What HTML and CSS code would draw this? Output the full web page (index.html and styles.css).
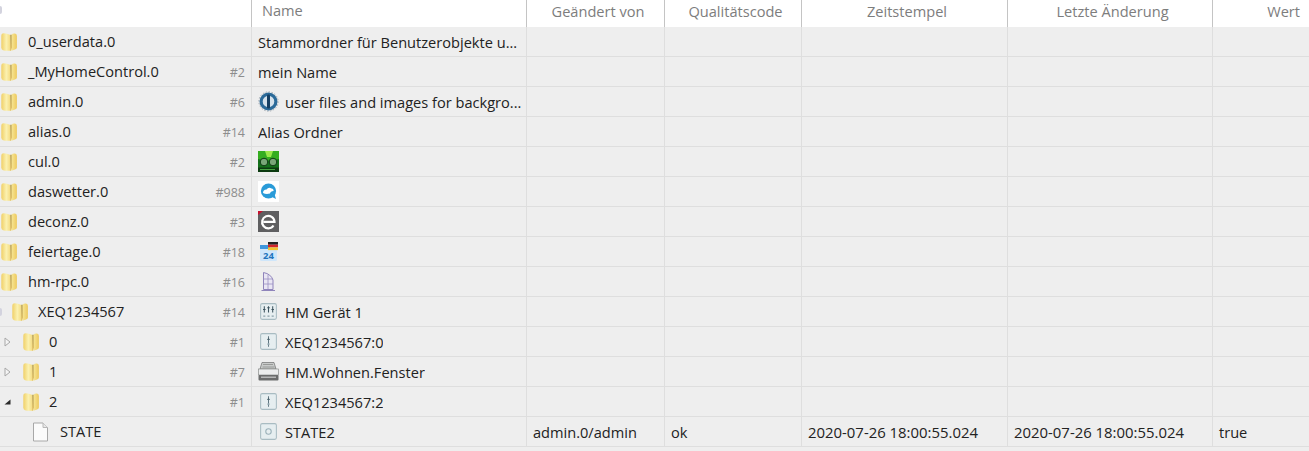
FILE: index.html
```html
<!DOCTYPE html>
<html lang="de">
<head>
  <meta charset="UTF-8">
  <title>Objekte</title>
  <link rel="stylesheet" href="styles.css">
</head>
<body>
  <svg class="defs" width="0" height="0">
    <defs>
      <linearGradient id="gradFolder" x1="0" y1="0" x2="1" y2="0">
        <stop offset="0" stop-color="#f0d068"/>
        <stop offset="0.55" stop-color="#fbf1b0"/>
        <stop offset="1" stop-color="#f4db80"/>
      </linearGradient>
      <linearGradient id="gradRight" x1="0" y1="0" x2="1" y2="0">
        <stop offset="0" stop-color="#f8e99a"/>
        <stop offset="1" stop-color="#edc95f"/>
      </linearGradient>
      <linearGradient id="gradFlap" x1="0" y1="0" x2="0" y2="1">
        <stop offset="0" stop-color="#b8a258"/>
        <stop offset="1" stop-color="#e4c05a"/>
      </linearGradient>
      <symbol id="folder" viewBox="0 0 16 18">
        <path d="M0.3 3 Q0.3 0.3 2.5 0.3 Q6 0.3 9.5 2 L9.5 17.8 Q4 18 2 17.2 Q0.3 16.5 0.3 14.5 Z" fill="url(#gradFolder)"/>
        <path d="M10 2 Q12 0.3 14 0.6 Q15.9 1 15.9 3 L15.9 14.5 Q15.9 16 14 16.5 L10.5 17.8 Z" fill="url(#gradRight)"/>
        <path d="M9.2 1.8 L10.6 1.8 L10.9 14.5 L10 17.8 L9.2 17.8 Z" fill="url(#gradFlap)"/>
      </symbol>
      <symbol id="device" viewBox="0 0 20 20">
        <rect x="2.5" y="2.5" width="15" height="15" rx="1.5" fill="#e6eef0" stroke="#a9bcc2"/>
        <path d="M10 5 V15" stroke="#5f7680" stroke-width="1"/>
        <path d="M8.5 8.5 H11.5 L10 6.5 Z" fill="#4c626c"/>
        <circle cx="10" cy="12.5" r="1" fill="#8aa0a8"/>
      </symbol>
    </defs>
  </svg>

  <div class="grid">
    <div class="row head">
      <div class="cell tree"><span class="edge-mark"></span></div>
      <div class="cell name-head">Name</div>
      <div class="cell center">Geändert von</div>
      <div class="cell center">Qualitätscode</div>
      <div class="cell center">Zeitstempel</div>
      <div class="cell center">Letzte Änderung</div>
      <div class="cell right">Wert</div>
    </div>

    <div class="row">
      <div class="cell tree lvl0"><svg class="folder"><use href="#folder"/></svg><span class="label">0_userdata.0</span></div>
      <div class="cell"><span class="text">Stammordner für Benutzerobjekte u...</span></div>
      <div class="cell"></div><div class="cell"></div><div class="cell"></div><div class="cell"></div><div class="cell"></div>
    </div>
    <div class="row">
      <div class="cell tree lvl0"><svg class="folder"><use href="#folder"/></svg><span class="label">_MyHomeControl.0</span><span class="count">#2</span></div>
      <div class="cell"><span class="text">mein Name</span></div>
      <div class="cell"></div><div class="cell"></div><div class="cell"></div><div class="cell"></div><div class="cell"></div>
    </div>
    <div class="row">
      <div class="cell tree lvl0"><svg class="folder"><use href="#folder"/></svg><span class="label">admin.0</span><span class="count">#6</span></div>
      <div class="cell">
        <svg class="icon" viewBox="0 0 21 21">
          <circle cx="10.5" cy="10.5" r="7.4" fill="#d5e2ec" stroke="#2b6a99" stroke-width="3.2"/>
          <circle cx="10.5" cy="10.5" r="9.6" fill="none" stroke="#7a8794" stroke-width="0.7" stroke-dasharray="1.5 1.5"/>
          <rect x="9" y="3.5" width="3" height="14" rx="1.2" fill="#153f63"/>
        </svg>
        <span class="text">user files and images for backgro...</span>
      </div>
      <div class="cell"></div><div class="cell"></div><div class="cell"></div><div class="cell"></div><div class="cell"></div>
    </div>
    <div class="row">
      <div class="cell tree lvl0"><svg class="folder"><use href="#folder"/></svg><span class="label">alias.0</span><span class="count">#14</span></div>
      <div class="cell"><span class="text">Alias Ordner</span></div>
      <div class="cell"></div><div class="cell"></div><div class="cell"></div><div class="cell"></div><div class="cell"></div>
    </div>
    <div class="row">
      <div class="cell tree lvl0"><svg class="folder"><use href="#folder"/></svg><span class="label">cul.0</span><span class="count">#2</span></div>
      <div class="cell">
        <svg class="icon" viewBox="0 0 21 21">
          <rect width="21" height="21" fill="#14701a"/>
          <path d="M0 0 H21 V8 Q10 11 0 8 Z" fill="#35ad20"/>
          <path d="M7 0 H15 L13 6 H9 Z" fill="#9be84a"/>
          <circle cx="6" cy="11" r="3.8" fill="#79a678" stroke="#0c3a10"/>
          <circle cx="15" cy="11" r="3.8" fill="#79a678" stroke="#0c3a10"/>
          <rect y="16.5" width="21" height="4.5" fill="#0c3a10"/>
          <rect x="2" y="18" width="15" height="1" fill="#47a342"/>
        </svg>
      </div>
      <div class="cell"></div><div class="cell"></div><div class="cell"></div><div class="cell"></div><div class="cell"></div>
    </div>
    <div class="row">
      <div class="cell tree lvl0"><svg class="folder"><use href="#folder"/></svg><span class="label">daswetter.0</span><span class="count">#988</span></div>
      <div class="cell">
        <svg class="icon" viewBox="0 0 21 21">
          <rect width="21" height="21" fill="#fff"/>
          <circle cx="10.5" cy="10" r="7.6" fill="#2a9bd8"/>
          <path d="M14 16 L18 18 L16.5 13 Z" fill="#2a9bd8"/>
          <path d="M5 12 Q5 8.5 8.5 8.5 Q10.5 5.8 13.5 7.5 Q16 8 15.5 10 Q12.5 10 12 12.5 Q8 13.5 5 12 Z" fill="#fff"/>
        </svg>
      </div>
      <div class="cell"></div><div class="cell"></div><div class="cell"></div><div class="cell"></div><div class="cell"></div>
    </div>
    <div class="row">
      <div class="cell tree lvl0"><svg class="folder"><use href="#folder"/></svg><span class="label">deconz.0</span><span class="count">#3</span></div>
      <div class="cell">
        <svg class="icon" viewBox="0 0 21 21">
          <rect width="21" height="21" fill="#5f5f61"/>
          <path d="M0 0 H5 L0 4 Z" fill="#c8102e"/>
          <path d="M15.5 14.5 A6.2 6.2 0 1 1 16.5 10.8 H5.5" fill="none" stroke="#fff" stroke-width="2.2"/>
        </svg>
      </div>
      <div class="cell"></div><div class="cell"></div><div class="cell"></div><div class="cell"></div><div class="cell"></div>
    </div>
    <div class="row">
      <div class="cell tree lvl0"><svg class="folder"><use href="#folder"/></svg><span class="label">feiertage.0</span><span class="count">#18</span></div>
      <div class="cell">
        <svg class="icon" viewBox="0 0 21 21">
          <rect x="2" y="4" width="17" height="16" rx="1.5" fill="#cfe6fa"/>
          <rect x="2" y="4" width="10" height="4" fill="#3f97dc"/>
          <rect x="10" y="1" width="10" height="2.7" fill="#222"/>
          <rect x="10" y="3.7" width="10" height="2.7" fill="#d3232a"/>
          <rect x="10" y="6.4" width="10" height="2.7" fill="#f1c22e"/>
          <text x="10.5" y="18.3" class="cal-day">24</text>
        </svg>
      </div>
      <div class="cell"></div><div class="cell"></div><div class="cell"></div><div class="cell"></div><div class="cell"></div>
    </div>
    <div class="row">
      <div class="cell tree lvl0"><svg class="folder"><use href="#folder"/></svg><span class="label">hm-rpc.0</span><span class="count">#16</span></div>
      <div class="cell">
        <svg class="icon" viewBox="0 0 21 21">
          <path d="M5.5 1.5 Q13 3 15 9 V18.5 H5.5 Z" fill="#e9e6f3" stroke="#8f84bb"/>
          <path d="M5.5 8 H15 M5.5 13 H15 M10 4 V18" stroke="#9a90c2" stroke-width="0.8" fill="none"/>
          <path d="M3.5 19.5 H17" stroke="#8f84bb" stroke-width="1"/>
        </svg>
      </div>
      <div class="cell"></div><div class="cell"></div><div class="cell"></div><div class="cell"></div><div class="cell"></div>
    </div>
    <div class="row">
      <div class="cell tree lvl1"><span class="edge-mark"></span><svg class="folder"><use href="#folder"/></svg><span class="label">XEQ1234567</span><span class="count">#14</span></div>
      <div class="cell">
        <svg class="icon" viewBox="0 0 20 20">
          <rect x="2.5" y="2.5" width="15" height="15" rx="1.5" fill="#e6eef0" stroke="#a9bcc2"/>
          <path d="M6 5 V11 M10 5 V11 M14 5 V11" stroke="#3f5560" stroke-width="1"/>
          <path d="M4.8 8 H7.2 M8.8 6.5 H11.2 M12.8 8 H15.2" stroke="#3f5560"/>
          <path d="M5 14.5 H7 M9 14.5 H11 M13 14.5 H15" stroke="#8aa0a8" stroke-width="1.2"/>
        </svg>
        <span class="text">HM Gerät 1</span>
      </div>
      <div class="cell"></div><div class="cell"></div><div class="cell"></div><div class="cell"></div><div class="cell"></div>
    </div>
    <div class="row">
      <div class="cell tree lvl2"><svg class="toggle" viewBox="0 0 7 10"><path d="M1 1 L6 5 L1 9 Z" fill="#f4f4f4" stroke="#a8a8a8"/></svg><svg class="folder"><use href="#folder"/></svg><span class="label">0</span><span class="count">#1</span></div>
      <div class="cell"><svg class="icon"><use href="#device"/></svg><span class="text">XEQ1234567:0</span></div>
      <div class="cell"></div><div class="cell"></div><div class="cell"></div><div class="cell"></div><div class="cell"></div>
    </div>
    <div class="row">
      <div class="cell tree lvl2"><svg class="toggle" viewBox="0 0 7 10"><path d="M1 1 L6 5 L1 9 Z" fill="#f4f4f4" stroke="#a8a8a8"/></svg><svg class="folder"><use href="#folder"/></svg><span class="label">1</span><span class="count">#7</span></div>
      <div class="cell">
        <svg class="icon" viewBox="0 0 21 21">
          <path d="M4 1.5 H16 L18 8 H2 Z" fill="#c9cbca" stroke="#6d6f6e" stroke-width="0.7"/>
          <path d="M5 3.5 H15 M4.5 6 H16.5" stroke="#8b8d8c" stroke-width="0.8"/>
          <rect x="0.5" y="8" width="20" height="6" fill="#eceded" stroke="#8b8d8c" stroke-width="0.7"/>
          <rect x="0.5" y="14" width="20" height="5.5" rx="1" fill="#6b6c6c"/>
          <rect x="3" y="15.5" width="15" height="1.5" fill="#b5b6b6"/>
        </svg>
        <span class="text">HM.Wohnen.Fenster</span>
      </div>
      <div class="cell"></div><div class="cell"></div><div class="cell"></div><div class="cell"></div><div class="cell"></div>
    </div>
    <div class="row">
      <div class="cell tree lvl2"><svg class="toggle" viewBox="0 0 7 10"><path d="M0.5 7.5 L6.5 7.5 L6.5 2.5 Z" fill="#2b2b2b"/></svg><svg class="folder"><use href="#folder"/></svg><span class="label">2</span><span class="count">#1</span></div>
      <div class="cell"><svg class="icon"><use href="#device"/></svg><span class="text">XEQ1234567:2</span></div>
      <div class="cell"></div><div class="cell"></div><div class="cell"></div><div class="cell"></div><div class="cell"></div>
    </div>
    <div class="row">
      <div class="cell tree lvl3">
        <svg class="file" viewBox="0 0 17 20">
          <path d="M1.5 1 H11 L15.5 5.5 V19 H1.5 Z" fill="#fbfbfb" stroke="#a8a8a8"/>
          <path d="M11 1 V5.5 H15.5" fill="#e8e8e8" stroke="#b8b8b8"/>
        </svg>
        <span class="label">STATE</span>
      </div>
      <div class="cell">
        <svg class="icon" viewBox="0 0 20 20">
          <rect x="2.5" y="2.5" width="15" height="15" rx="1.5" fill="#e6eef0" stroke="#a9bcc2"/>
          <circle cx="10" cy="10" r="2.6" fill="none" stroke="#9ab0b8"/>
        </svg>
        <span class="text">STATE2</span>
      </div>
      <div class="cell">admin.0/admin</div>
      <div class="cell">ok</div>
      <div class="cell stamp">2020-07-26 18:00:55.024</div>
      <div class="cell stamp">2020-07-26 18:00:55.024</div>
      <div class="cell">true</div>
    </div>
    <div class="row stub"></div>
  </div>
</body>
</html>
```

FILE: styles.css
```css
html, body {
  margin: 0;
  padding: 0;
  height: 451px;
  overflow: hidden;
  background: #fff;
}
body {
  font-family: "Open Sans", "Noto Sans", sans-serif;
  font-size: 14.6px;
  color: #222;
}
.defs {
  display: block;
  height: 0;
}
.row {
  display: grid;
  grid-template-columns: 252px 275px 138px 137px 206px 205px 96px;
  height: 30px;
  background: #eeeeee;
  border-bottom: 1px solid #dedede;
  box-sizing: border-box;
}
.head {
  height: 27px;
  background: #fff;
  border-bottom: 0;
  color: #7d7d7d;
}
.stub {
  height: 4px;
  border-bottom: 0;
}
.cell {
  display: flex;
  align-items: center;
  padding-left: 6px;
  padding-top: 1px;
  border-right: 1px solid #dedede;
  box-sizing: border-box;
  white-space: nowrap;
  overflow: hidden;
}
.head .cell {
  border-right-color: #c4c4c4;
  padding-top: 0;
  padding-bottom: 5px;
}
.cell:last-child {
  border-right: 0;
}
.center {
  justify-content: center;
  padding-left: 5px;
}
.right {
  justify-content: flex-end;
  padding-right: 9px;
}
.head .name-head {
  padding-left: 10px;
  padding-bottom: 8px;
}
.stamp {
  font-size: 14.9px;
}
.tree {
  padding-top: 0;
  padding-right: 6px;
}
.head .tree {
  padding-left: 0;
  padding-bottom: 7px;
}
.lvl0 {
  padding-left: 1px;
}
.lvl1 {
  padding-left: 0;
}
.lvl2 {
  padding-left: 4px;
}
.lvl3 {
  padding-left: 32px;
}
.folder {
  width: 16px;
  height: 18px;
  flex: none;
}
.file {
  width: 17px;
  height: 20px;
  flex: none;
}
.label {
  margin-left: 10px;
  margin-top: -2px;
}
.lvl0 .label,
.lvl3 .label {
  margin-left: 11px;
}
.count {
  margin-left: auto;
  margin-top: 2px;
  font-size: 12.5px;
  color: #8d8d8d;
}
.edge-mark {
  flex: none;
  width: 2px;
  height: 8px;
  margin-right: 10px;
  background: #d3d3de;
  border-radius: 0 4px 4px 0;
}
.toggle {
  flex: none;
  width: 7px;
  height: 10px;
  margin-right: 12px;
}
.icon {
  width: 21px;
  height: 21px;
  flex: none;
  margin-right: 6px;
  margin-top: -1px;
}
.text {
  overflow: hidden;
}
.cal-day {
  font-family: "Open Sans", sans-serif;
  font-size: 9.5px;
  font-weight: 700;
  fill: #2274bd;
  text-anchor: middle;
}
```
